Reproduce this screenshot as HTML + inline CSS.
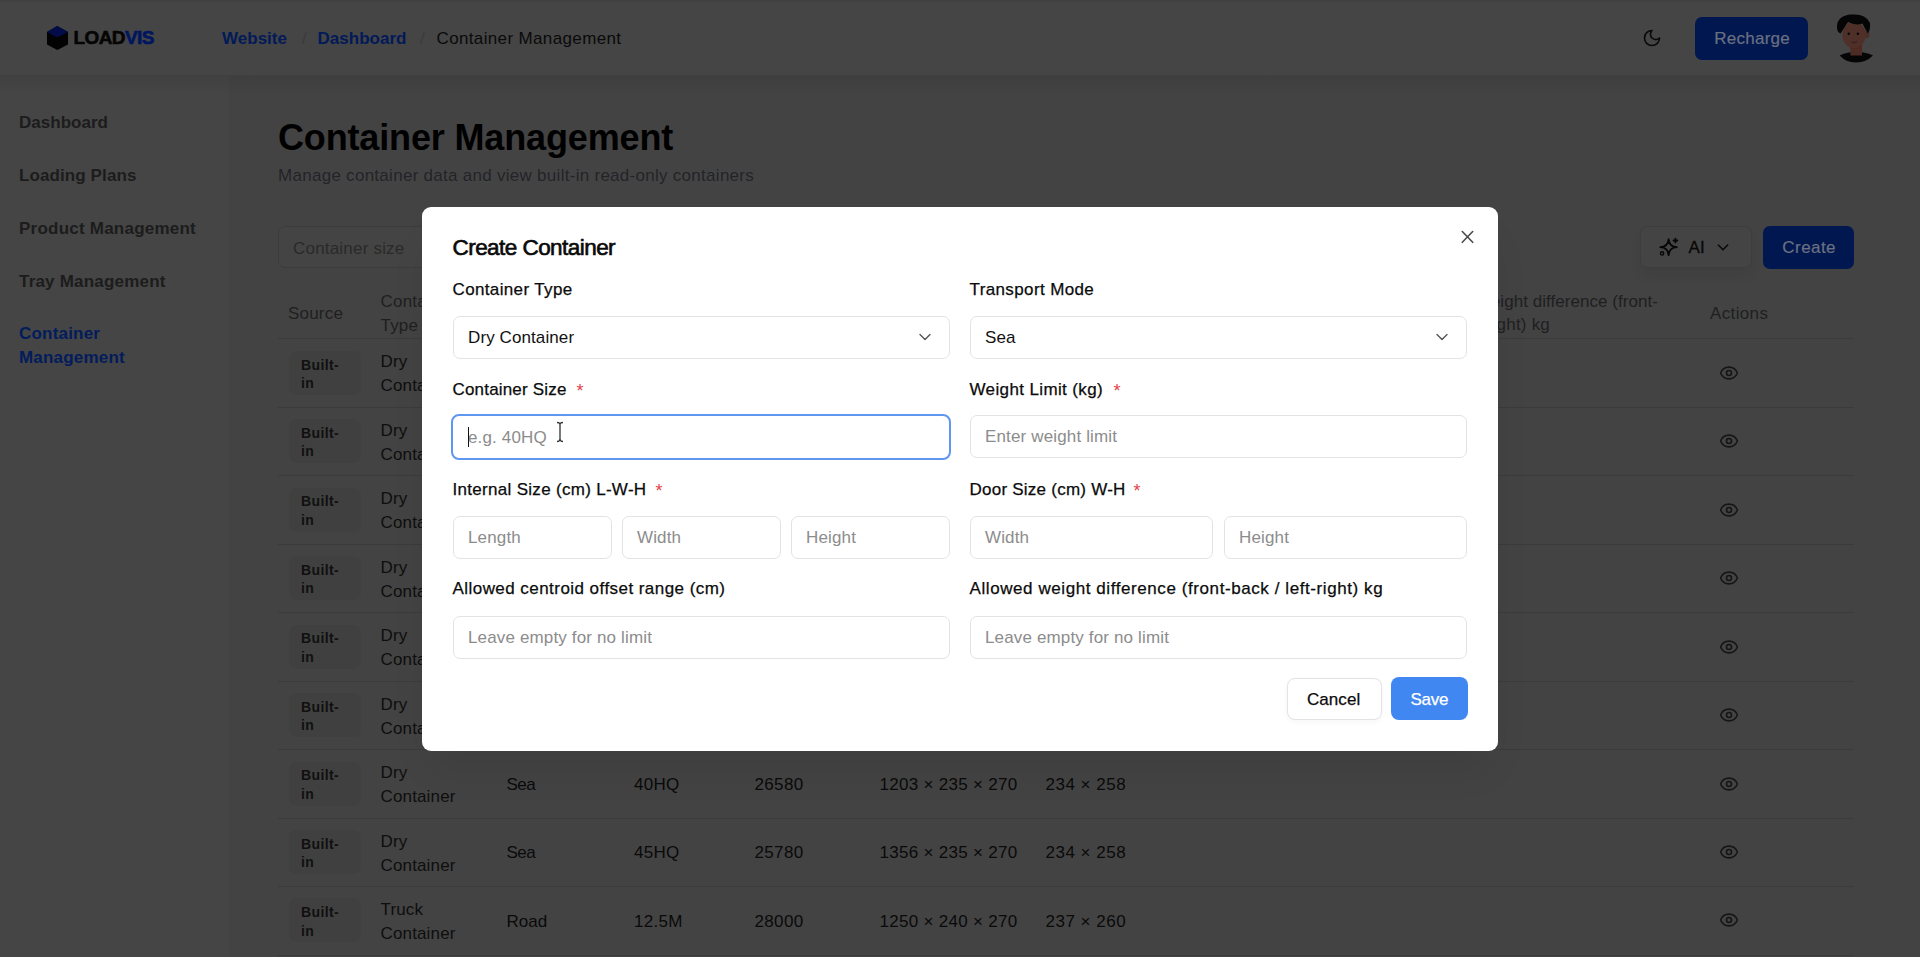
<!DOCTYPE html>
<html><head><meta charset="utf-8"><title>Container Management</title>
<style>
html,body{margin:0;padding:0;width:1920px;height:957px;overflow:hidden;background:#434343}
body{position:relative;font-family:'Liberation Sans', sans-serif}
.t{position:absolute;white-space:nowrap;line-height:1}
.r{position:absolute}
</style></head><body>
<div class="r" style="left:0px;top:0px;width:1920px;height:957px;background:#434343"></div>
<div class="r" style="left:0px;top:75px;width:229px;height:882px;background:#454545"></div>
<div class="r" style="left:0px;top:0px;width:1920px;height:75px;background:#454545"></div>
<div class="r" style="left:0px;top:75px;width:1920px;height:20px;background:linear-gradient(rgba(0,0,0,0.07),rgba(0,0,0,0))"></div>
<div class="r" style="left:0px;top:0px;width:1920px;height:2px;background:#404040"></div>
<svg class="r" style="left:40px;top:20px" width="40" height="36" viewBox="40 20 40 36"><polygon points="57.3,26 68,32 68,44.4 57.3,50 47,44.4 47,32" fill="#030303"/><polygon points="57.3,26 68,32 57.3,37.5 47,32" fill="#030c48"/></svg>
<div class="t" style="left:73.50px;top:27.92px;font-size:19px;font-weight:700;color:#050505;letter-spacing:-0.6px;-webkit-text-stroke:0.6px #050505">LOAD<span style="color:#011660;-webkit-text-stroke:0.6px #011660">VIS</span></div>
<div class="t" style="left:222.00px;top:29.81px;font-size:17px;font-weight:700;color:#021a58;letter-spacing:0.02px;">Website</div>
<div class="t" style="left:302.00px;top:29.81px;font-size:17px;font-weight:400;color:#3a3a3a;letter-spacing:0px;">/</div>
<div class="t" style="left:317.50px;top:29.81px;font-size:17px;font-weight:700;color:#021a58;letter-spacing:0.02px;">Dashboard</div>
<div class="t" style="left:420.00px;top:29.81px;font-size:17px;font-weight:400;color:#3a3a3a;letter-spacing:0px;">/</div>
<div class="t" style="left:436.50px;top:29.81px;font-size:17px;font-weight:400;color:#0a0a0a;letter-spacing:0.36px;">Container Management</div>
<svg class="r" style="left:1642px;top:28px" width="20" height="20" viewBox="0 0 24 24" fill="none" stroke="#0a0a0a" stroke-width="2" stroke-linecap="round" stroke-linejoin="round"><path d="M12 3a6 6 0 0 0 9 9 9 9 0 1 1-9-9Z"/></svg>
<div class="r" style="left:1695px;top:17px;width:113px;height:43px;background:#01174f;border-radius:7px"></div>
<div class="t" style="left:1714.30px;top:29.81px;font-size:17px;font-weight:400;color:#6a7082;letter-spacing:0.25px;-webkit-text-stroke:0.2px #6a7082">Recharge</div>
<svg class="r" style="left:1825px;top:8px" width="60" height="60" viewBox="0 0 60 60">
<path d="M14.7 47.5 Q31 40 48 47.5 Q41 54.5 31 54.5 Q21 54.5 14.7 47.5Z" fill="#050505"/>
<rect x="25.4" y="35" width="11.6" height="12.5" fill="#4c2c25"/>
<rect x="25.4" y="37" width="11.6" height="4" fill="#552620"/>
<ellipse cx="41.3" cy="26.5" rx="3" ry="3.8" fill="#4a2e27"/>
<ellipse cx="29" cy="27" rx="11.6" ry="13.2" fill="#4e3028"/>
<path d="M12.3 22 Q10 9 25 6.6 Q41 5 45 15 Q45.6 21 43 25.5 Q40 21 37.5 15.5 Q31 18 23 14 Q19 20 15.5 25.5 Q13 25 12.3 22Z" fill="#050505"/>
<circle cx="23.8" cy="25.7" r="1.25" fill="#080808"/><circle cx="32.9" cy="25.7" r="1.25" fill="#080808"/>
<path d="M26.8 34 Q29.5 35.3 32.2 33.6" stroke="#2a1712" stroke-width="0.8" fill="none"/>
</svg>
<div class="t" style="left:19.00px;top:113.71px;font-size:17px;font-weight:700;color:#1c1c1c;letter-spacing:0.02px;">Dashboard</div>
<div class="t" style="left:19.00px;top:166.81px;font-size:17px;font-weight:700;color:#1c1c1c;letter-spacing:0.1px;">Loading Plans</div>
<div class="t" style="left:19.00px;top:219.81px;font-size:17px;font-weight:700;color:#1c1c1c;letter-spacing:0.23px;">Product Management</div>
<div class="t" style="left:19.00px;top:272.61px;font-size:17px;font-weight:700;color:#1c1c1c;letter-spacing:0.2px;">Tray Management</div>
<div class="t" style="left:19.00px;top:325.31px;font-size:17px;font-weight:700;color:#021c5c;letter-spacing:0.2px;">Container</div>
<div class="t" style="left:19.00px;top:348.71px;font-size:17px;font-weight:700;color:#021c5c;letter-spacing:0.2px;">Management</div>
<div class="t" style="left:278.00px;top:119.53px;font-size:36px;font-weight:700;color:#000;letter-spacing:-0.15px;">Container Management</div>
<div class="t" style="left:278.00px;top:166.81px;font-size:17px;font-weight:400;color:#232328;letter-spacing:0.28px;">Manage container data and view built-in read-only containers</div>
<div class="r" style="left:278px;top:226px;width:400px;height:42px;border:1px solid #3c3c3c;border-radius:7px;box-sizing:border-box;background:#444"></div>
<div class="t" style="left:293.00px;top:239.61px;font-size:17px;font-weight:400;color:#2a2a2a;letter-spacing:0.2px;">Container size</div>
<div class="r" style="left:1640px;top:226px;width:112px;height:42px;border:1px solid #3d3d3d;border-radius:7px;box-sizing:border-box;background:#444;box-shadow:0 8px 12px rgba(0,0,0,0.06)"></div>
<svg class="r" style="left:1655px;top:234px" width="28" height="26" viewBox="1655 234 28 26" fill="none" stroke="#060606" stroke-width="1.8" stroke-linecap="round" stroke-linejoin="round"><path d="M1668.6,239.2 C1668.9499999999998,244.2 1671.6,246.85 1676.8999999999999,247.2 C1671.6,247.54999999999998 1668.9499999999998,250.2 1668.6,255.2 C1668.25,250.2 1665.6,247.54999999999998 1660.3,247.2 C1665.6,246.85 1668.25,244.2 1668.6,239.2 Z"/><path d="M1675.4 238.6v3.8M1673.5 240.5h3.8"/><circle cx="1662.1" cy="253.4" r="1.6" stroke-width="1.4"/></svg>
<div class="t" style="left:1688.50px;top:238.91px;font-size:17px;font-weight:400;color:#080808;letter-spacing:0.2px;-webkit-text-stroke:0.3px #080808">AI</div>
<svg class="r" style="left:1715px;top:239.3px" width="16" height="16" viewBox="0 0 24 24" fill="none" stroke="#080808" stroke-width="2.2" stroke-linecap="round" stroke-linejoin="round"><path d="m5 9 7 7 7-7"/></svg>
<div class="r" style="left:1763px;top:226px;width:91px;height:43px;background:#01174f;border-radius:7px"></div>
<div class="t" style="left:1782.30px;top:238.91px;font-size:17px;font-weight:400;color:#6a7082;letter-spacing:0.45px;-webkit-text-stroke:0.2px #6a7082">Create</div>
<div class="t" style="left:288.00px;top:304.61px;font-size:17px;font-weight:400;color:#1f1f1f;letter-spacing:0.2px;">Source</div>
<div class="t" style="left:380.50px;top:292.61px;font-size:17px;font-weight:400;color:#1f1f1f;letter-spacing:0.2px;">Container</div>
<div class="t" style="left:380.50px;top:317.11px;font-size:17px;font-weight:400;color:#1f1f1f;letter-spacing:0.2px;">Type</div>
<div class="t" style="left:1200.00px;top:292.61px;font-size:17px;font-weight:400;color:#1f1f1f;letter-spacing:0.05px;width:458px;text-align:right">Allowed weight difference (front-</div>
<div class="t" style="left:1200.00px;top:316.31px;font-size:17px;font-weight:400;color:#1f1f1f;letter-spacing:0.2px;width:350px;text-align:right">back / left-right) kg</div>
<div class="t" style="left:1710.00px;top:304.91px;font-size:17px;font-weight:400;color:#1f1f1f;letter-spacing:0.36px;">Actions</div>
<div class="r" style="left:278px;top:338px;width:1576px;height:1px;background:#3b3b3b"></div>
<div class="r" style="left:289px;top:351px;width:72px;height:44px;background:#404040;border-radius:8px"></div>
<div class="t" style="left:301.00px;top:357.55px;font-size:14px;font-weight:700;color:#101010;letter-spacing:0.37px;">Built-</div>
<div class="t" style="left:301.00px;top:375.95px;font-size:14px;font-weight:700;color:#101010;letter-spacing:0.37px;">in</div>
<div class="t" style="left:380.50px;top:353.41px;font-size:17px;font-weight:400;color:#0e0e0e;letter-spacing:0.15px;">Dry</div>
<div class="t" style="left:380.50px;top:377.41px;font-size:17px;font-weight:400;color:#0e0e0e;letter-spacing:0.15px;">Container</div>
<svg class="r" style="left:1719px;top:363px" width="20" height="20" viewBox="0 0 24 24" fill="none" stroke="#151515" stroke-width="1.9" stroke-linecap="round" stroke-linejoin="round"><path d="M2.06 12.35a1 1 0 0 1 0-.7 10.75 10.75 0 0 1 19.88 0 1 1 0 0 1 0 .7 10.75 10.75 0 0 1-19.88 0"/><circle cx="12" cy="12" r="3"/></svg>
<div class="r" style="left:278px;top:407px;width:1576px;height:1px;background:#3b3b3b"></div>
<div class="r" style="left:289px;top:419px;width:72px;height:44px;background:#404040;border-radius:8px"></div>
<div class="t" style="left:301.00px;top:426.00px;font-size:14px;font-weight:700;color:#101010;letter-spacing:0.37px;">Built-</div>
<div class="t" style="left:301.00px;top:444.40px;font-size:14px;font-weight:700;color:#101010;letter-spacing:0.37px;">in</div>
<div class="t" style="left:380.50px;top:421.86px;font-size:17px;font-weight:400;color:#0e0e0e;letter-spacing:0.15px;">Dry</div>
<div class="t" style="left:380.50px;top:445.86px;font-size:17px;font-weight:400;color:#0e0e0e;letter-spacing:0.15px;">Container</div>
<svg class="r" style="left:1719px;top:431px" width="20" height="20" viewBox="0 0 24 24" fill="none" stroke="#151515" stroke-width="1.9" stroke-linecap="round" stroke-linejoin="round"><path d="M2.06 12.35a1 1 0 0 1 0-.7 10.75 10.75 0 0 1 19.88 0 1 1 0 0 1 0 .7 10.75 10.75 0 0 1-19.88 0"/><circle cx="12" cy="12" r="3"/></svg>
<div class="r" style="left:278px;top:475px;width:1576px;height:1px;background:#3b3b3b"></div>
<div class="r" style="left:289px;top:488px;width:72px;height:44px;background:#404040;border-radius:8px"></div>
<div class="t" style="left:301.00px;top:494.45px;font-size:14px;font-weight:700;color:#101010;letter-spacing:0.37px;">Built-</div>
<div class="t" style="left:301.00px;top:512.85px;font-size:14px;font-weight:700;color:#101010;letter-spacing:0.37px;">in</div>
<div class="t" style="left:380.50px;top:490.31px;font-size:17px;font-weight:400;color:#0e0e0e;letter-spacing:0.15px;">Dry</div>
<div class="t" style="left:380.50px;top:514.31px;font-size:17px;font-weight:400;color:#0e0e0e;letter-spacing:0.15px;">Container</div>
<svg class="r" style="left:1719px;top:500px" width="20" height="20" viewBox="0 0 24 24" fill="none" stroke="#151515" stroke-width="1.9" stroke-linecap="round" stroke-linejoin="round"><path d="M2.06 12.35a1 1 0 0 1 0-.7 10.75 10.75 0 0 1 19.88 0 1 1 0 0 1 0 .7 10.75 10.75 0 0 1-19.88 0"/><circle cx="12" cy="12" r="3"/></svg>
<div class="r" style="left:278px;top:544px;width:1576px;height:1px;background:#3b3b3b"></div>
<div class="r" style="left:289px;top:556px;width:72px;height:44px;background:#404040;border-radius:8px"></div>
<div class="t" style="left:301.00px;top:562.90px;font-size:14px;font-weight:700;color:#101010;letter-spacing:0.37px;">Built-</div>
<div class="t" style="left:301.00px;top:581.30px;font-size:14px;font-weight:700;color:#101010;letter-spacing:0.37px;">in</div>
<div class="t" style="left:380.50px;top:558.76px;font-size:17px;font-weight:400;color:#0e0e0e;letter-spacing:0.15px;">Dry</div>
<div class="t" style="left:380.50px;top:582.76px;font-size:17px;font-weight:400;color:#0e0e0e;letter-spacing:0.15px;">Container</div>
<svg class="r" style="left:1719px;top:568px" width="20" height="20" viewBox="0 0 24 24" fill="none" stroke="#151515" stroke-width="1.9" stroke-linecap="round" stroke-linejoin="round"><path d="M2.06 12.35a1 1 0 0 1 0-.7 10.75 10.75 0 0 1 19.88 0 1 1 0 0 1 0 .7 10.75 10.75 0 0 1-19.88 0"/><circle cx="12" cy="12" r="3"/></svg>
<div class="r" style="left:278px;top:612px;width:1576px;height:1px;background:#3b3b3b"></div>
<div class="r" style="left:289px;top:625px;width:72px;height:44px;background:#404040;border-radius:8px"></div>
<div class="t" style="left:301.00px;top:631.35px;font-size:14px;font-weight:700;color:#101010;letter-spacing:0.37px;">Built-</div>
<div class="t" style="left:301.00px;top:649.75px;font-size:14px;font-weight:700;color:#101010;letter-spacing:0.37px;">in</div>
<div class="t" style="left:380.50px;top:627.21px;font-size:17px;font-weight:400;color:#0e0e0e;letter-spacing:0.15px;">Dry</div>
<div class="t" style="left:380.50px;top:651.21px;font-size:17px;font-weight:400;color:#0e0e0e;letter-spacing:0.15px;">Container</div>
<svg class="r" style="left:1719px;top:637px" width="20" height="20" viewBox="0 0 24 24" fill="none" stroke="#151515" stroke-width="1.9" stroke-linecap="round" stroke-linejoin="round"><path d="M2.06 12.35a1 1 0 0 1 0-.7 10.75 10.75 0 0 1 19.88 0 1 1 0 0 1 0 .7 10.75 10.75 0 0 1-19.88 0"/><circle cx="12" cy="12" r="3"/></svg>
<div class="r" style="left:278px;top:681px;width:1576px;height:1px;background:#3b3b3b"></div>
<div class="r" style="left:289px;top:693px;width:72px;height:44px;background:#404040;border-radius:8px"></div>
<div class="t" style="left:301.00px;top:699.80px;font-size:14px;font-weight:700;color:#101010;letter-spacing:0.37px;">Built-</div>
<div class="t" style="left:301.00px;top:718.20px;font-size:14px;font-weight:700;color:#101010;letter-spacing:0.37px;">in</div>
<div class="t" style="left:380.50px;top:695.66px;font-size:17px;font-weight:400;color:#0e0e0e;letter-spacing:0.15px;">Dry</div>
<div class="t" style="left:380.50px;top:719.66px;font-size:17px;font-weight:400;color:#0e0e0e;letter-spacing:0.15px;">Container</div>
<svg class="r" style="left:1719px;top:705px" width="20" height="20" viewBox="0 0 24 24" fill="none" stroke="#151515" stroke-width="1.9" stroke-linecap="round" stroke-linejoin="round"><path d="M2.06 12.35a1 1 0 0 1 0-.7 10.75 10.75 0 0 1 19.88 0 1 1 0 0 1 0 .7 10.75 10.75 0 0 1-19.88 0"/><circle cx="12" cy="12" r="3"/></svg>
<div class="r" style="left:278px;top:749px;width:1576px;height:1px;background:#3b3b3b"></div>
<div class="r" style="left:289px;top:762px;width:72px;height:44px;background:#404040;border-radius:8px"></div>
<div class="t" style="left:301.00px;top:768.25px;font-size:14px;font-weight:700;color:#101010;letter-spacing:0.37px;">Built-</div>
<div class="t" style="left:301.00px;top:786.65px;font-size:14px;font-weight:700;color:#101010;letter-spacing:0.37px;">in</div>
<div class="t" style="left:380.50px;top:764.11px;font-size:17px;font-weight:400;color:#0e0e0e;letter-spacing:0.15px;">Dry</div>
<div class="t" style="left:380.50px;top:788.11px;font-size:17px;font-weight:400;color:#0e0e0e;letter-spacing:0.15px;">Container</div>
<div class="t" style="left:506.50px;top:775.71px;font-size:17px;font-weight:400;color:#0a0a0a;letter-spacing:-0.5px;">Sea</div>
<div class="t" style="left:634.00px;top:775.71px;font-size:17px;font-weight:400;color:#0a0a0a;letter-spacing:0.3px;">40HQ</div>
<div class="t" style="left:754.50px;top:775.71px;font-size:17px;font-weight:400;color:#0a0a0a;letter-spacing:0.35px;">26580</div>
<div class="t" style="left:879.50px;top:775.71px;font-size:17px;font-weight:400;color:#0a0a0a;letter-spacing:0.3px;">1203 × 235 × 270</div>
<div class="t" style="left:1045.50px;top:775.71px;font-size:17px;font-weight:400;color:#0a0a0a;letter-spacing:0.5px;">234 × 258</div>
<svg class="r" style="left:1719px;top:774px" width="20" height="20" viewBox="0 0 24 24" fill="none" stroke="#151515" stroke-width="1.9" stroke-linecap="round" stroke-linejoin="round"><path d="M2.06 12.35a1 1 0 0 1 0-.7 10.75 10.75 0 0 1 19.88 0 1 1 0 0 1 0 .7 10.75 10.75 0 0 1-19.88 0"/><circle cx="12" cy="12" r="3"/></svg>
<div class="r" style="left:278px;top:818px;width:1576px;height:1px;background:#3b3b3b"></div>
<div class="r" style="left:289px;top:830px;width:72px;height:44px;background:#404040;border-radius:8px"></div>
<div class="t" style="left:301.00px;top:836.70px;font-size:14px;font-weight:700;color:#101010;letter-spacing:0.37px;">Built-</div>
<div class="t" style="left:301.00px;top:855.10px;font-size:14px;font-weight:700;color:#101010;letter-spacing:0.37px;">in</div>
<div class="t" style="left:380.50px;top:832.56px;font-size:17px;font-weight:400;color:#0e0e0e;letter-spacing:0.15px;">Dry</div>
<div class="t" style="left:380.50px;top:856.56px;font-size:17px;font-weight:400;color:#0e0e0e;letter-spacing:0.15px;">Container</div>
<div class="t" style="left:506.50px;top:844.16px;font-size:17px;font-weight:400;color:#0a0a0a;letter-spacing:-0.5px;">Sea</div>
<div class="t" style="left:634.00px;top:844.16px;font-size:17px;font-weight:400;color:#0a0a0a;letter-spacing:0.3px;">45HQ</div>
<div class="t" style="left:754.50px;top:844.16px;font-size:17px;font-weight:400;color:#0a0a0a;letter-spacing:0.35px;">25780</div>
<div class="t" style="left:879.50px;top:844.16px;font-size:17px;font-weight:400;color:#0a0a0a;letter-spacing:0.3px;">1356 × 235 × 270</div>
<div class="t" style="left:1045.50px;top:844.16px;font-size:17px;font-weight:400;color:#0a0a0a;letter-spacing:0.5px;">234 × 258</div>
<svg class="r" style="left:1719px;top:842px" width="20" height="20" viewBox="0 0 24 24" fill="none" stroke="#151515" stroke-width="1.9" stroke-linecap="round" stroke-linejoin="round"><path d="M2.06 12.35a1 1 0 0 1 0-.7 10.75 10.75 0 0 1 19.88 0 1 1 0 0 1 0 .7 10.75 10.75 0 0 1-19.88 0"/><circle cx="12" cy="12" r="3"/></svg>
<div class="r" style="left:278px;top:886px;width:1576px;height:1px;background:#3b3b3b"></div>
<div class="r" style="left:289px;top:898px;width:72px;height:44px;background:#404040;border-radius:8px"></div>
<div class="t" style="left:301.00px;top:905.15px;font-size:14px;font-weight:700;color:#101010;letter-spacing:0.37px;">Built-</div>
<div class="t" style="left:301.00px;top:923.55px;font-size:14px;font-weight:700;color:#101010;letter-spacing:0.37px;">in</div>
<div class="t" style="left:380.50px;top:901.01px;font-size:17px;font-weight:400;color:#0e0e0e;letter-spacing:0.15px;">Truck</div>
<div class="t" style="left:380.50px;top:925.01px;font-size:17px;font-weight:400;color:#0e0e0e;letter-spacing:0.15px;">Container</div>
<div class="t" style="left:506.50px;top:912.61px;font-size:17px;font-weight:400;color:#0a0a0a;letter-spacing:0.0px;">Road</div>
<div class="t" style="left:634.00px;top:912.61px;font-size:17px;font-weight:400;color:#0a0a0a;letter-spacing:0.3px;">12.5M</div>
<div class="t" style="left:754.50px;top:912.61px;font-size:17px;font-weight:400;color:#0a0a0a;letter-spacing:0.35px;">28000</div>
<div class="t" style="left:879.50px;top:912.61px;font-size:17px;font-weight:400;color:#0a0a0a;letter-spacing:0.3px;">1250 × 240 × 270</div>
<div class="t" style="left:1045.50px;top:912.61px;font-size:17px;font-weight:400;color:#0a0a0a;letter-spacing:0.5px;">237 × 260</div>
<svg class="r" style="left:1719px;top:910px" width="20" height="20" viewBox="0 0 24 24" fill="none" stroke="#151515" stroke-width="1.9" stroke-linecap="round" stroke-linejoin="round"><path d="M2.06 12.35a1 1 0 0 1 0-.7 10.75 10.75 0 0 1 19.88 0 1 1 0 0 1 0 .7 10.75 10.75 0 0 1-19.88 0"/><circle cx="12" cy="12" r="3"/></svg>
<div class="r" style="left:278px;top:955px;width:1576px;height:1px;background:#3b3b3b"></div>
<div class="r" style="left:289px;top:967px;width:72px;height:44px;background:#404040;border-radius:8px"></div>
<div class="t" style="left:301.00px;top:973.60px;font-size:14px;font-weight:700;color:#101010;letter-spacing:0.37px;">Built-</div>
<div class="t" style="left:301.00px;top:992.00px;font-size:14px;font-weight:700;color:#101010;letter-spacing:0.37px;">in</div>
<div class="t" style="left:380.50px;top:969.46px;font-size:17px;font-weight:400;color:#0e0e0e;letter-spacing:0.15px;">Dry</div>
<div class="t" style="left:380.50px;top:993.46px;font-size:17px;font-weight:400;color:#0e0e0e;letter-spacing:0.15px;">Container</div>
<div class="t" style="left:506.50px;top:981.06px;font-size:17px;font-weight:400;color:#0a0a0a;letter-spacing:-0.5px;">Sea</div>
<div class="t" style="left:634.00px;top:981.06px;font-size:17px;font-weight:400;color:#0a0a0a;letter-spacing:0.3px;">20GP</div>
<div class="t" style="left:754.50px;top:981.06px;font-size:17px;font-weight:400;color:#0a0a0a;letter-spacing:0.35px;">28200</div>
<div class="t" style="left:879.50px;top:981.06px;font-size:17px;font-weight:400;color:#0a0a0a;letter-spacing:0.3px;">590 × 235 × 239</div>
<div class="t" style="left:1045.50px;top:981.06px;font-size:17px;font-weight:400;color:#0a0a0a;letter-spacing:0.5px;">234 × 228</div>
<svg class="r" style="left:1719px;top:979px" width="20" height="20" viewBox="0 0 24 24" fill="none" stroke="#151515" stroke-width="1.9" stroke-linecap="round" stroke-linejoin="round"><path d="M2.06 12.35a1 1 0 0 1 0-.7 10.75 10.75 0 0 1 19.88 0 1 1 0 0 1 0 .7 10.75 10.75 0 0 1-19.88 0"/><circle cx="12" cy="12" r="3"/></svg>
<div class="r" style="left:278px;top:1023px;width:1576px;height:1px;background:#3b3b3b"></div>
<div class="r" style="left:422px;top:207px;width:1076px;height:544px;background:#fff;border-radius:9px;box-shadow:0 24px 40px -12px rgba(0,0,0,0.10)"></div>
<div class="t" style="left:452.50px;top:236.65px;font-size:22.5px;font-weight:400;color:#0a0a0a;letter-spacing:-0.55px;-webkit-text-stroke:0.65px #0a0a0a">Create Container</div>
<svg class="r" style="left:1460px;top:229px" width="15" height="16" viewBox="0 0 15 16" fill="none" stroke="#4a4a4a" stroke-width="1.6" stroke-linecap="round"><path d="M2.3 2.5 L12.7 13.3 M12.7 2.5 L2.3 13.3"/></svg>
<div class="t" style="left:452.50px;top:280.61px;font-size:17px;font-weight:400;color:#0b0b0b;letter-spacing:0.36px;-webkit-text-stroke:0.25px #0b0b0b">Container Type</div>
<div class="r" style="left:453px;top:315.5px;width:497px;height:43px;border:1px solid #e3e3e3;border-radius:7px;box-sizing:border-box;background:#fff"></div>
<div class="t" style="left:468.00px;top:328.91px;font-size:17px;font-weight:400;color:#111;letter-spacing:0.1px;">Dry Container</div>
<svg class="r" style="left:918px;top:330px" width="14" height="14" viewBox="0 0 14 14" fill="none" stroke="#555" stroke-width="1.4" stroke-linecap="round" stroke-linejoin="round"><path d="M2 4.5 L7 9.5 L12 4.5"/></svg>
<div class="t" style="left:969.50px;top:280.61px;font-size:17px;font-weight:400;color:#0b0b0b;letter-spacing:0.38px;-webkit-text-stroke:0.25px #0b0b0b">Transport Mode</div>
<div class="r" style="left:970px;top:315.5px;width:497px;height:43px;border:1px solid #e3e3e3;border-radius:7px;box-sizing:border-box;background:#fff"></div>
<div class="t" style="left:985.00px;top:328.91px;font-size:17px;font-weight:400;color:#111;letter-spacing:0.1px;">Sea</div>
<svg class="r" style="left:1435px;top:330px" width="14" height="14" viewBox="0 0 14 14" fill="none" stroke="#555" stroke-width="1.4" stroke-linecap="round" stroke-linejoin="round"><path d="M2 4.5 L7 9.5 L12 4.5"/></svg>
<div class="t" style="left:452.50px;top:381.01px;font-size:17px;font-weight:400;color:#0b0b0b;letter-spacing:0.18px;-webkit-text-stroke:0.25px #0b0b0b">Container Size</div>
<div class="t" style="left:576.50px;top:382.16px;font-size:18px;font-weight:400;color:#e3424a;letter-spacing:0px;">*</div>
<div class="r" style="left:451px;top:414px;width:500px;height:46px;border:2px solid #5f97f0;border-radius:8px;box-sizing:border-box;background:#fff"></div>
<div class="t" style="left:468.00px;top:428.91px;font-size:17px;font-weight:400;color:#8c8c8c;letter-spacing:0.15px;">e.g. 40HQ</div>
<div class="t" style="left:969.50px;top:381.01px;font-size:17px;font-weight:400;color:#0b0b0b;letter-spacing:0.37px;-webkit-text-stroke:0.25px #0b0b0b">Weight Limit (kg)</div>
<div class="t" style="left:1113.50px;top:382.16px;font-size:18px;font-weight:400;color:#e3424a;letter-spacing:0px;">*</div>
<div class="r" style="left:970px;top:414.5px;width:497px;height:43px;border:1px solid #e3e3e3;border-radius:7px;box-sizing:border-box;background:#fff"></div>
<div class="t" style="left:985.00px;top:427.91px;font-size:17px;font-weight:400;color:#8c8c8c;letter-spacing:0.15px;">Enter weight limit</div>
<div class="t" style="left:452.50px;top:481.31px;font-size:17px;font-weight:400;color:#0b0b0b;letter-spacing:0.3px;-webkit-text-stroke:0.25px #0b0b0b">Internal Size (cm) L-W-H</div>
<div class="t" style="left:655.50px;top:482.46px;font-size:18px;font-weight:400;color:#e3424a;letter-spacing:0px;">*</div>
<div class="r" style="left:453px;top:515.5px;width:159px;height:43px;border:1px solid #e3e3e3;border-radius:7px;box-sizing:border-box;background:#fff"></div>
<div class="t" style="left:468.00px;top:528.91px;font-size:17px;font-weight:400;color:#8c8c8c;letter-spacing:0.15px;">Length</div>
<div class="r" style="left:622px;top:515.5px;width:159px;height:43px;border:1px solid #e3e3e3;border-radius:7px;box-sizing:border-box;background:#fff"></div>
<div class="t" style="left:637.00px;top:528.91px;font-size:17px;font-weight:400;color:#8c8c8c;letter-spacing:0.15px;">Width</div>
<div class="r" style="left:791px;top:515.5px;width:159px;height:43px;border:1px solid #e3e3e3;border-radius:7px;box-sizing:border-box;background:#fff"></div>
<div class="t" style="left:806.00px;top:528.91px;font-size:17px;font-weight:400;color:#8c8c8c;letter-spacing:0.15px;">Height</div>
<div class="t" style="left:969.50px;top:481.31px;font-size:17px;font-weight:400;color:#0b0b0b;letter-spacing:0.24px;-webkit-text-stroke:0.25px #0b0b0b">Door Size (cm) W-H</div>
<div class="t" style="left:1133.50px;top:482.46px;font-size:18px;font-weight:400;color:#e3424a;letter-spacing:0px;">*</div>
<div class="r" style="left:970px;top:515.5px;width:243px;height:43px;border:1px solid #e3e3e3;border-radius:7px;box-sizing:border-box;background:#fff"></div>
<div class="t" style="left:985.00px;top:528.91px;font-size:17px;font-weight:400;color:#8c8c8c;letter-spacing:0.15px;">Width</div>
<div class="r" style="left:1224px;top:515.5px;width:243px;height:43px;border:1px solid #e3e3e3;border-radius:7px;box-sizing:border-box;background:#fff"></div>
<div class="t" style="left:1239.00px;top:528.91px;font-size:17px;font-weight:400;color:#8c8c8c;letter-spacing:0.15px;">Height</div>
<div class="t" style="left:452.50px;top:580.41px;font-size:17px;font-weight:400;color:#0b0b0b;letter-spacing:0.45px;-webkit-text-stroke:0.25px #0b0b0b">Allowed centroid offset range (cm)</div>
<div class="r" style="left:453px;top:615.5px;width:497px;height:43px;border:1px solid #e3e3e3;border-radius:7px;box-sizing:border-box;background:#fff"></div>
<div class="t" style="left:468.00px;top:628.91px;font-size:17px;font-weight:400;color:#8c8c8c;letter-spacing:0.15px;">Leave empty for no limit</div>
<div class="t" style="left:969.50px;top:580.41px;font-size:17px;font-weight:400;color:#0b0b0b;letter-spacing:0.58px;-webkit-text-stroke:0.25px #0b0b0b">Allowed weight difference (front-back / left-right) kg</div>
<div class="r" style="left:970px;top:615.5px;width:497px;height:43px;border:1px solid #e3e3e3;border-radius:7px;box-sizing:border-box;background:#fff"></div>
<div class="t" style="left:985.00px;top:628.91px;font-size:17px;font-weight:400;color:#8c8c8c;letter-spacing:0.15px;">Leave empty for no limit</div>
<div class="r" style="left:468px;top:427px;width:1px;height:20px;background:#111"></div>
<svg class="r" style="left:555px;top:421px" width="10" height="22" viewBox="0 0 10 22" fill="none" stroke="#333" stroke-width="1.3"><path d="M2 1.5 Q5 1.5 5 4 L5 18 Q5 20.5 2 20.5 M8 1.5 Q5 1.5 5 4 M5 18 Q5 20.5 8 20.5"/></svg>
<div class="r" style="left:1287px;top:678px;width:95px;height:42px;border:1px solid #e3e3e3;border-radius:8px;box-sizing:border-box;background:#fff;box-shadow:0 2px 6px rgba(0,0,0,0.04)"></div>
<div class="t" style="left:1307.00px;top:690.51px;font-size:17px;font-weight:400;color:#0b0b0b;letter-spacing:0.05px;-webkit-text-stroke:0.25px #0b0b0b">Cancel</div>
<div class="r" style="left:1391px;top:677px;width:77px;height:43px;background:#4187f2;border-radius:8px"></div>
<div class="t" style="left:1410.50px;top:690.51px;font-size:17px;font-weight:400;color:#fff;letter-spacing:-0.3px;-webkit-text-stroke:0.25px #fff">Save</div>
</body></html>
